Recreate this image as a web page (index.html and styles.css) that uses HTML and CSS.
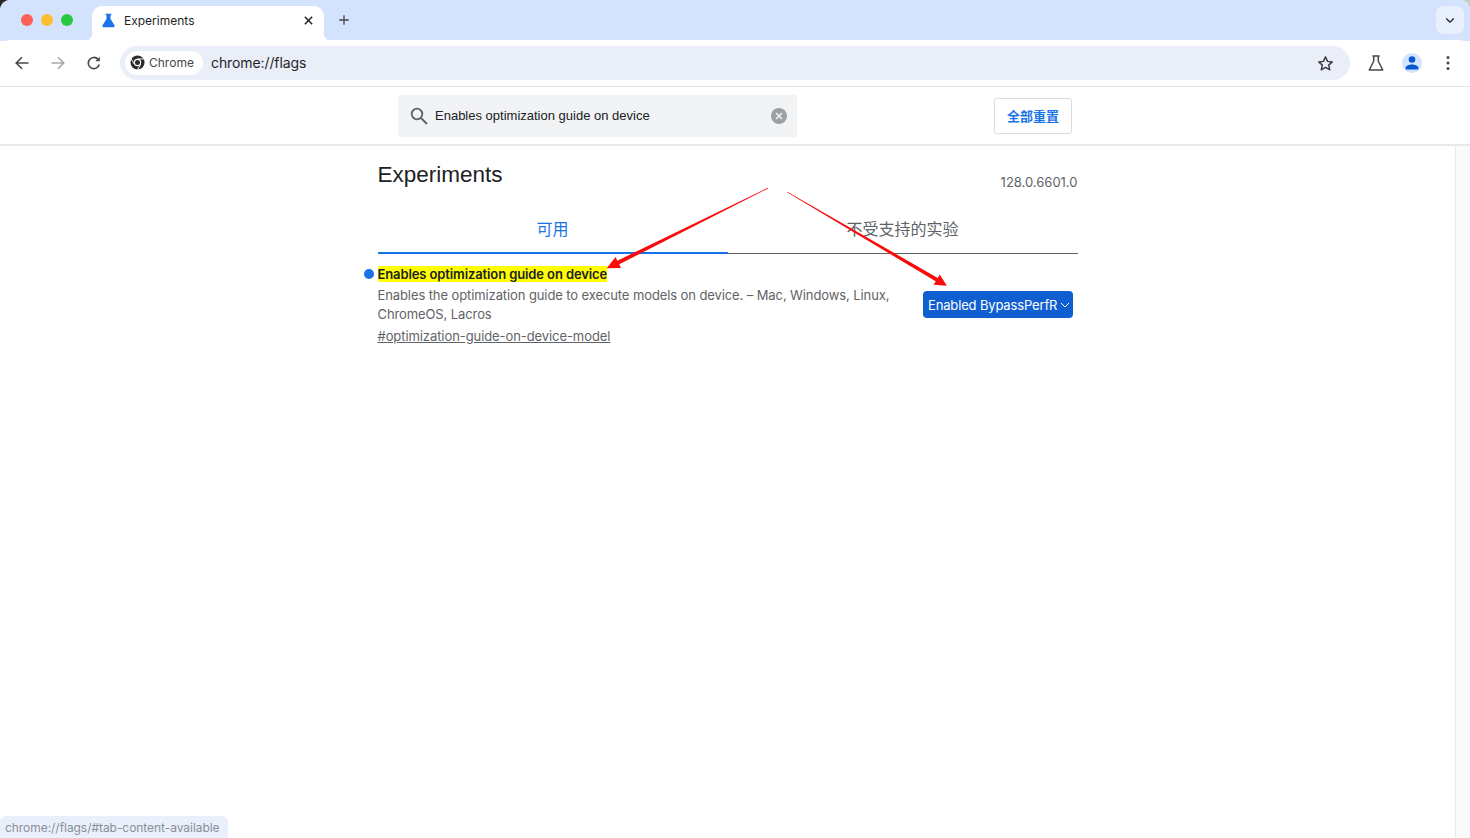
FILE: index.html
```html
<!DOCTYPE html>
<html lang="zh">
<head>
<meta charset="utf-8">
<title>Experiments</title>
<link rel="stylesheet" href="styles.css">
</head>
<body>
<div class="window">
  <div class="tabstrip">
    <div class="lights"><i class="light red"></i><i class="light yellow"></i><i class="light green"></i></div>
    <div class="tab">
      <svg class="tab-icon" viewBox="0 0 16 16"><path fill="#1a73e8" d="M5 .8h6v1.600h-.9v3.800l4.300 7.200c.5.800-.1 1.800-1 1.800H2.600c-.9 0-1.500-1-1-1.800l4.300-7.200V2.400H5z"/></svg>
      <span class="tab-title">Experiments</span>
      <svg class="tab-close" viewBox="0 0 12 12"><path d="M2 2l8 8M10 2l-8 8" stroke="#1f1f1f" stroke-width="1.600" fill="none"/></svg>
    </div>
    <svg class="new-tab" viewBox="0 0 14 14"><path d="M7 1.500v11M1.500 7h11" stroke="#444746" stroke-width="1.500" fill="none"/></svg>
    <div class="tab-search"><svg viewBox="0 0 12 8" class="chev"><path d="M1.500 1.500L6 6l4.500-4.500" stroke="#1f1f1f" stroke-width="1.600" fill="none"/></svg></div>
  </div>
  <div class="toolbar">
    <svg class="nav" viewBox="0 0 16 16"><path d="M14.500 8H2.500M8 2.200L2.200 8 8 13.800" stroke="#474747" stroke-width="1.600" fill="none"/></svg>
    <svg class="nav" viewBox="0 0 16 16"><path d="M1.500 8h12M8 2.200L13.800 8 8 13.800" stroke="#a8a8a8" stroke-width="1.600" fill="none"/></svg>
    <svg class="nav" viewBox="0 0 16 16"><path d="M13.300 9.500A5.600 5.600 0 1 1 12 4.200" stroke="#474747" stroke-width="1.600" fill="none"/><path d="M13.800 1.800v4.500H9.300z" fill="#474747"/></svg>
    <div class="omnibox">
      <div class="chip">
        <svg class="chip-logo" viewBox="0 0 16 16"><circle cx="8" cy="8" r="7.500" fill="#2b2b2b"/><circle cx="8" cy="8" r="3.900" fill="#fff"/><circle cx="8" cy="8" r="2.700" fill="#2b2b2b"/><path d="M8 4.200h7M4.700 10L1.300 4.200M11.300 10L8 15.800" stroke="#fff" stroke-width="1"/></svg>
        <span>Chrome</span>
      </div>
      <span class="url">chrome://flags</span>
      <svg class="star" viewBox="0 0 16 16"><path d="M8 1.800l1.900 4.200 4.500.5-3.400 3 1 4.500L8 11.700 4 14l1-4.500-3.400-3 4.500-.5z" stroke="#3f3f3f" stroke-width="1.400" stroke-linejoin="round" fill="none"/></svg>
    </div>
    <svg class="flask" viewBox="0 0 16 16"><path d="M4.800 1.700h6.400M6 1.700v4.500L2 14.200h12L10 6.200V1.700" stroke="#474747" stroke-width="1.300" fill="none" stroke-linejoin="round"/></svg>
    <div class="avatar"><svg viewBox="0 0 20 20"><circle cx="10" cy="6.500" r="3.300" fill="#0b57d0"/><path d="M3.600 16.500v-1.600c0-2 3.500-3.400 6.400-3.400s6.400 1.400 6.400 3.400v1.600z" fill="#0b57d0"/></svg></div>
    <svg class="menu" viewBox="0 0 4 16"><circle cx="2" cy="2.500" r="1.500" fill="#474747"/><circle cx="2" cy="8" r="1.500" fill="#474747"/><circle cx="2" cy="13.500" r="1.500" fill="#474747"/></svg>
  </div>
  <header class="flags-header">
    <div class="search">
      <svg class="search-icon" viewBox="0 0 18 18"><circle cx="7" cy="7" r="5.300" stroke="#5f6368" stroke-width="1.800" fill="none"/><path d="M11 11l6 6" stroke="#5f6368" stroke-width="2" fill="none"/></svg>
      <span class="search-text">Enables optimization guide on device</span>
      <svg class="search-clear" viewBox="0 0 16 16"><circle cx="8" cy="8" r="8" fill="#9aa0a6"/><path d="M5 5l6 6M11 5l-6 6" stroke="#f1f3f4" stroke-width="1.600" fill="none"/></svg>
    </div>
    <div class="reset">全部重置</div>
  </header>
  <div class="page">
    <main class="content">
      <div class="column">
        <div class="title-row">
          <h1>Experiments</h1>
          <span class="version">128.0.6601.0</span>
        </div>
        <div class="tabs">
          <div class="page-tab active">可用</div>
          <div class="page-tab">不受支持的实验</div>
        </div>
        <div class="experiment">
          <div class="exp-text">
            <div class="exp-title"><i class="dot"></i><mark>Enables optimization guide on device</mark></div>
            <p class="exp-desc">Enables the optimization guide to execute models on device. – Mac, Windows, Linux, ChromeOS, Lacros</p>
            <a class="exp-link" href="#optimization-guide-on-device-model">#optimization-guide-on-device-model</a>
          </div>
          <div class="exp-select">Enabled BypassPerfR<svg viewBox="0 0 10 6" class="select-chev"><path d="M1 1l4 4 4-4" stroke="#fff" stroke-width="1" fill="none"/></svg></div>
        </div>
      </div>
    </main>
    <div class="scrollbar"></div>
  </div>
  <svg class="arrows" viewBox="0 0 1470 838">
    <path d="M768 187.700L617.400 260.700L615.600 257.100L606.700 268.300L621 267.900L619.200 264.300L768.300 188.400z" fill="#fa0a0a"/>
    <path d="M787.300 191.700L937.700 277.900L939.700 274.400L946.900 285.800L933.700 284.800L935.700 281.300L787 192.300z" fill="#fa0a0a"/>
  </svg>
  <div class="status">chrome://flags/#tab-content-available</div>
</div>
</body>
</html>
```
FILE: styles.css
```css
* { box-sizing: border-box; }
html, body { margin: 0; height: 100%; overflow: hidden; }
html { background: linear-gradient(90deg, #2a2a2a 50%, #c9cfc4 50%); }
.window {
  position: relative;
  width: 1470px;
  height: 838px;
  display: flex;
  flex-direction: column;
  font-family: "Inter", "Noto Sans CJK SC", sans-serif;
  color: #202124;
  border-radius: 10px 10px 0 0;
  background: #fff;
}
.tabstrip {
  height: 41px;
  flex: none;
  background: #d3e3fd;
  display: flex;
  align-items: flex-start;
  border-top-left-radius: 10px;
  border-top-right-radius: 10px;
  padding-left: 21px;
}
.lights { display: flex; gap: 8px; padding-top: 14px; width: 71px; }
.light { width: 12px; height: 12px; border-radius: 50%; display: block; }
.red { background: #ff5f57; }
.yellow { background: #febc2e; }
.green { background: #28c840; }
.tab {
  position: relative;
  z-index: 1;
  width: 232px;
  height: 35px;
  margin-top: 6px;
  background: #fff;
  border-radius: 10px 10px 0 0;
  display: flex;
  align-items: center;
  padding: 0 10px 7px;
}
.tab::before, .tab::after {
  content: "";
  position: absolute;
  bottom: 0;
  width: 8px;
  height: 8px;
}
.tab::before { left: -8px; background: radial-gradient(circle at 0 0, transparent 8px, #fff 8.500px); }
.tab::after { right: -8px; background: radial-gradient(circle at 100% 0, transparent 8px, #fff 8.500px); }
.tab-icon { width: 15px; height: 15px; margin-right: 8px; flex: none; margin-left: -1px; }
.tab-title { font-size: 12px; color: #1f1f1f; flex: 1; }
.tab-close { width: 11px; height: 11px; flex: none; }
.new-tab { width: 12px; height: 12px; margin: 14px 0 0 14px; flex: none; }
.tab-search {
  margin-left: auto;
  margin-right: 6px;
  margin-top: 6px;
  width: 28px;
  height: 28px;
  border-radius: 8px;
  background: #e9f0fd;
  display: flex;
  align-items: center;
  justify-content: center;
}
.chev { width: 10px; height: 7px; }
.toolbar {
  height: 47px;
  flex: none;
  position: relative;
  background: #fff;
  border-radius: 10px 10px 0 0;
  margin-top: -1px;
  border-bottom: 1px solid #e3e3e3;
  display: flex;
  align-items: center;
  padding-left: 14px;
}
.nav { width: 16px; height: 16px; margin-right: 20px; flex: none; }
.omnibox {
  width: 1230px;
  height: 34px;
  margin-left: -2px;
  border-radius: 17px;
  background: #e9eef9;
  display: flex;
  align-items: center;
  padding: 0 16px 0 5px;
}
.chip {
  height: 24px;
  width: 78px;
  border-radius: 12px;
  background: #fff;
  display: flex;
  align-items: center;
  padding-left: 5px;
  padding-bottom: 1px;
  font-size: 12px;
  color: #474747;
  gap: 4px;
}
.chip-logo { width: 15px; height: 15px; flex: none; }
.url { font-size: 14px; color: #1f1f1f; margin-left: 8px; flex: 1; letter-spacing: -0.100px; padding-bottom: 1px; }
.star { width: 17px; height: 17px; flex: none; }
.flask { width: 18px; height: 18px; flex: none; margin-left: 17px; }
.avatar {
  width: 20px;
  height: 20px;
  border-radius: 50%;
  background: #d3e3fd;
  margin-left: 17px;
  flex: none;
  display: flex;
}
.avatar svg { width: 20px; height: 20px; }
.menu { width: 4px; height: 16px; margin-left: 24px; flex: none; }
.flags-header {
  height: 59px;
  flex: none;
  display: flex;
  align-items: center;
  padding-left: 398px;
  padding-top: 1px;
  border-bottom: 2px solid #e8e8e8;
}
.search {
  width: 399px;
  height: 42px;
  background: #f1f3f4;
  border-radius: 2px;
  display: flex;
  align-items: center;
  padding: 0 10px 0 12px;
}
.search-icon { width: 18px; height: 18px; flex: none; margin-right: 7px; }
.search-text { flex: 1; font-family: "Liberation Sans", sans-serif; font-size: 13px; color: #202124; padding-bottom: 2px; }
.search-clear { width: 16px; height: 16px; flex: none; }
.reset {
  margin-left: 197px;
  width: 78px;
  height: 36px;
  border: 1px solid #dadce0;
  border-radius: 3px;
  color: #1a73e8;
  font-size: 13px;
  font-weight: 600;
  display: flex;
  align-items: center;
  justify-content: center;
  padding-bottom: 2px;
}
.page { flex: 1; display: flex; min-height: 0; }
.content { flex: 1; }
.column { width: 700px; margin-left: 377.500px; }
.title-row {
  display: flex;
  justify-content: space-between;
  align-items: flex-end;
  height: 46px;
}
h1 { margin: 0; font-family: "Liberation Sans", sans-serif; font-size: 22.500px; font-weight: 400; color: #202124; line-height: 28px; padding-bottom: 3px; }
.version { font-size: 13px; color: #5f6368; padding-bottom: 2px; }
.tabs { display: flex; border-bottom: 1px solid #5f6368; height: 62px; }
.page-tab {
  flex: 1;
  font-size: 16px;
  color: #5f6368;
  text-align: center;
  padding-top: 24px;
}
.page-tab.active { color: #1a73e8; border-bottom: 2px solid #1a73e8; height: 62px; }
.experiment { display: flex; justify-content: space-between; padding-top: 12px; }
.exp-text { width: 530px; }
.exp-title { position: relative; font-size: 13px; font-weight: 600; line-height: 17px; color: #202124; letter-spacing: -0.110px; }
.dot {
  position: absolute;
  left: -14px;
  top: 3px;
  width: 10px;
  height: 10px;
  border-radius: 50%;
  background: #1a73e8;
}
mark { background: #ffff00; color: #202124; }
.exp-desc { margin: 3px 0 0; font-size: 13px; line-height: 19px; color: #5f6368; letter-spacing: -0.100px; }
.exp-link { display: block; margin-top: 3px; font-size: 13px; line-height: 19px; color: #5f6368; text-decoration: underline; letter-spacing: -0.080px; }
.exp-select {
  width: 150px;
  height: 27px;
  margin: 25px 4.500px 0 0;
  background: #0f5fd1;
  border-radius: 4px;
  color: #fff;
  font-size: 13px;
  letter-spacing: -0.150px;
  display: flex;
  align-items: center;
  padding-left: 5px;
  white-space: nowrap;
}
.select-chev { width: 10px; height: 6px; margin-left: 3px; flex: none; }
.scrollbar { width: 15px; flex: none; background: #fafafa; border-left: 1px solid #e8e8e8; }
.arrows { position: absolute; left: 0; top: 0; width: 1470px; height: 838px; pointer-events: none; }
.status {
  position: absolute;
  left: 0;
  bottom: 0;
  width: 228px;
  height: 22px;
  background: #e9effb;
  border-radius: 6px 6px 0 0;
  font-size: 12px;
  letter-spacing: -0.050px;
  color: #8a8f98;
  padding: 4px 0 0 5px;
  white-space: nowrap;
}
```
